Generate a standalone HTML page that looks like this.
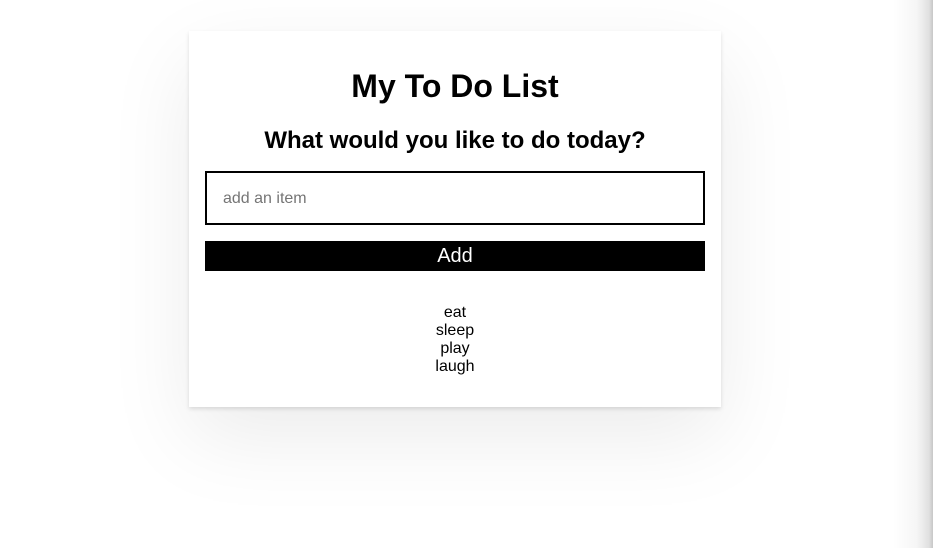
<!DOCTYPE html>
<html><head><style>
html,body{margin:0;width:933px;height:548px;overflow:hidden;background:#fff;font-family:"Liberation Sans",Arial,sans-serif;}
.edge{position:absolute;right:0;top:0;width:40px;height:548px;background:linear-gradient(to right,rgba(0,0,0,0),rgba(0,0,0,0.04) 60%,rgba(0,0,0,0.12) 90%,rgba(0,0,0,0.22));}
.card{position:absolute;left:189px;top:31px;width:532px;height:376px;background:#fff;box-shadow:0 30px 80px rgba(0,0,0,0.08),0 2px 4px rgba(0,0,0,0.12);text-align:center;}
h1{margin:0;position:absolute;top:37px;left:0;right:0;font-size:32px;line-height:36px;font-weight:bold;}
h2{margin:0;position:absolute;top:96px;left:0;right:0;font-size:24px;line-height:28px;font-weight:bold;}
.inp{position:absolute;left:16px;top:140px;width:496px;height:50px;border:2px solid #000;text-align:left;}
.inp span{position:absolute;left:16px;top:17px;font-size:16px;color:#757575;}
.btn{position:absolute;left:16px;top:210px;width:500px;height:30px;background:#000;color:#fff;font-size:20px;line-height:30px;}
.list{position:absolute;top:273px;left:0;right:0;font-size:16px;line-height:18px;}
</style></head><body>
<div class="edge"></div>
<div class="card">
<h1>My To Do List</h1>
<h2>What would you like to do today?</h2>
<div class="inp"><span>add an item</span></div>
<div class="btn">Add</div>
<div class="list">eat<br>sleep<br>play<br>laugh</div>
</div>
</body></html>
